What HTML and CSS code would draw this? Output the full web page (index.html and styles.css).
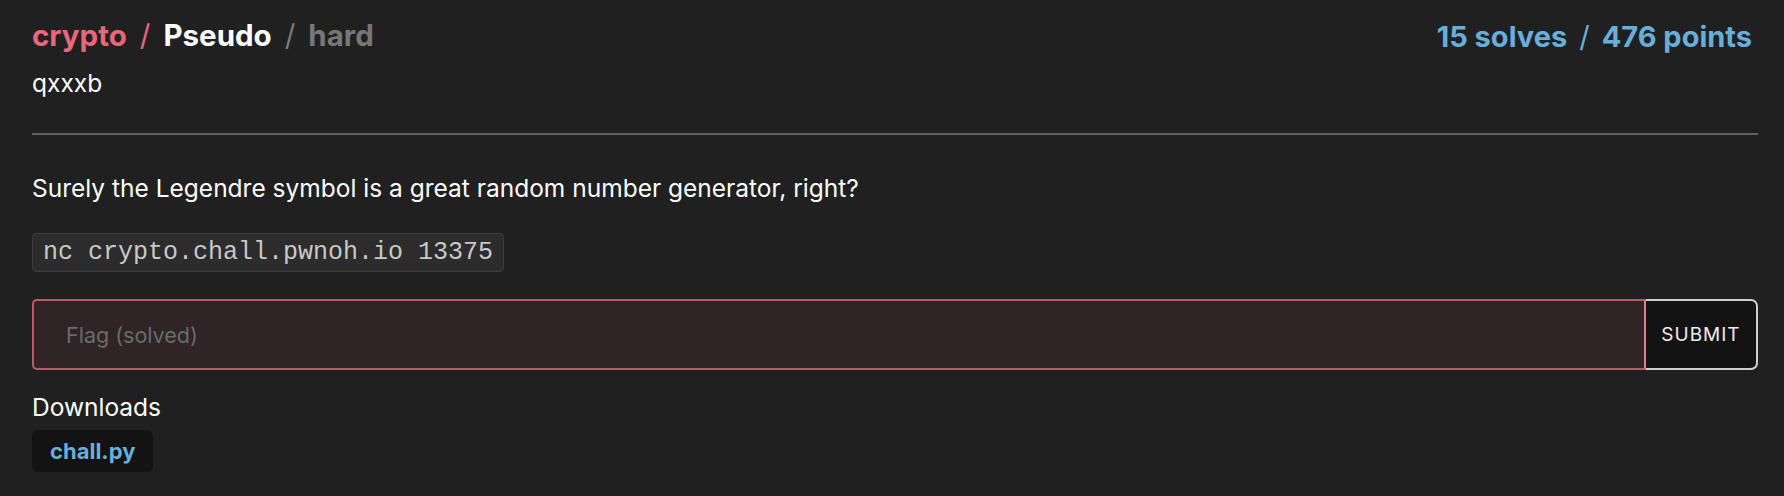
FILE: index.html
```html
<!DOCTYPE html>
<html>
<head>
<meta charset="utf-8">
<link rel="stylesheet" href="styles.css">
</head>
<body>
<div class="page">
  <header class="head">
    <div class="head-left">
      <h1 class="title"><span class="cat">crypto</span><span class="sep cat-sep">/</span><span class="name">Pseudo</span><span class="sep">/</span><span class="diff">hard</span></h1>
      <div class="author">qxxxb</div>
    </div>
    <div class="stats"><span>15 solves</span><span class="sep stat-sep">/</span><span>476 points</span></div>
  </header>
  <hr class="rule">
  <p class="desc">Surely the Legendre symbol is a great random number generator, right?</p>
  <div class="code-row"><code class="code">nc crypto.chall.pwnoh.io 13375</code></div>
  <form class="flag-form">
    <input class="flag-input" type="text" placeholder="Flag (solved)">
    <button class="submit" type="button">SUBMIT</button>
  </form>
  <div class="downloads-label">Downloads</div>
  <div class="files"><a class="file" href="#">chall.py</a></div>
</div>
</body>
</html>
```
FILE: styles.css
```css
html, body {
  margin: 0;
  padding: 0;
  background: #202020;
}
body {
  font-family: Inter, "Noto Sans", sans-serif;
  color: #ffffff;
}
.page {
  padding: 17px 26px 0 32px;
}
.head {
  display: flex;
  justify-content: space-between;
  align-items: flex-start;
}
.title {
  margin: 0;
  font-size: 29.5px;
  font-weight: 700;
  line-height: 36px;
}
.cat { color: #e8677b; }
.sep {
  font-weight: 400;
  color: #777;
  margin: 0 13px;
}
.cat-sep { color: #e8677b; }
.name { color: #ffffff; }
.diff { color: #777777; }
.author {
  font-size: 24.5px;
  line-height: 32px;
  margin-top: 14px;
}
.stats {
  font-size: 29px;
  font-weight: 700;
  color: #67afd9;
  line-height: 36px;
  margin-top: 2px;
  margin-right: 6px;
}
.stat-sep {
  color: #67afd9;
  margin: 0 12px;
}
.rule {
  border: 0;
  height: 2px;
  background: #616161;
  margin: 34px 0 0;
}
.desc {
  font-size: 24.5px;
  line-height: 32px;
  margin: 37px 0 0;
}
.code-row {
  margin-top: 29px;
  display: flex;
}
.code {
  font-family: "Liberation Mono", "DejaVu Sans Mono", monospace;
  font-size: 25px;
  line-height: 30px;
  color: #c8c8c8;
  background: #2c2c2c;
  border: 1px solid #3e3e3e;
  border-radius: 4px;
  padding: 4px 10px 3px;
}
.flag-form {
  display: flex;
  margin-top: 27px;
  height: 71px;
}
.flag-input {
  flex: 1;
  background: #2f2426;
  border: 2px solid #b85a68;
  border-right-color: #e0808e;
  border-radius: 5px 0 0 5px;
  padding: 0 0 0 32px;
  font-family: Inter, "Noto Sans", sans-serif;
  font-size: 21.5px;
  color: #fff;
  outline: none;
}
.flag-input::placeholder {
  color: #6b6b6b;
}
.submit {
  width: 112px;
  background: #131313;
  color: #eeeeee;
  border: 2px solid #cfcfcf;
  border-left: 0;
  border-radius: 0 7px 7px 0;
  font-family: Inter, "Noto Sans", sans-serif;
  font-size: 19px;
  letter-spacing: 1px;
  padding: 0;
}
.downloads-label {
  font-size: 24.5px;
  line-height: 32px;
  margin-top: 21px;
}
.files {
  display: flex;
  margin-top: 7px;
}
.file {
  background: #131313;
  color: #67afd9;
  font-weight: 700;
  font-size: 22px;
  line-height: 42px;
  padding: 0 18px;
  border-radius: 6px;
  text-decoration: none;
}
```
